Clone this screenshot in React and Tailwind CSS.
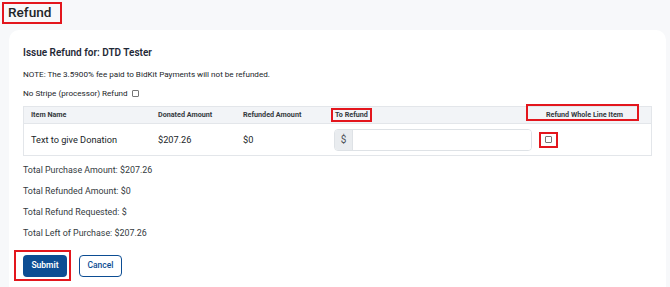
const RED = "border-2 border-[#e3161d]";

const totals = [
  "Total Purchase Amount: $207.26",
  "Total Refunded Amount: $0",
  "Total Refund Requested: $",
  "Total Left of Purchase: $207.26",
];

export default function App() {
  return (
    <div className="min-h-screen bg-[#f7f8fa] text-[#212529] font-['Roboto',sans-serif] overflow-hidden">
      {/* Page title */}
      <div className="pl-[2px] pt-[2px]">
        <div className={`h-[22px] w-[60px] ${RED} flex items-center pl-[4px]`}>
          <h1 className="text-[13.6px] leading-none font-medium">Refund</h1>
        </div>
      </div>

      {/* Card */}
      <div className="ml-[9px] mr-[4px] mt-[6px] bg-white rounded-t-[10px] pl-[14px] pr-[14px] pt-[16px] pb-[20px]">
        <h2 className="text-[10px] leading-[14px] font-semibold text-[#1f2937]">
          Issue Refund for: DTD Tester
        </h2>
        <p className="mt-[8px] text-[8.1px] leading-[12px] text-[#212529]">
          NOTE: The 3.5900% fee paid to BidKit Payments will not be refunded.
        </p>
        <div className="mt-[7px] flex items-center gap-[4px] text-[8.1px] leading-[12px]">
          <span>No Stripe (processor) Refund</span>
          <span className="w-[7px] h-[7px] border border-[#777] rounded-[1px]" />
        </div>

        {/* Table */}
        <div className="mt-[7px] border border-[#e3e6ea]">
          <div className="grid grid-cols-[127px_85px_91px_212px_1fr] h-[17px] bg-[#f2f4f7] border-b border-[#e3e6ea] items-center text-[7.2px] font-bold text-[#343a40]">
            <span className="pl-[7px]">Item Name</span>
            <span className="pl-[7px]">Donated Amount</span>
            <span className="pl-[7px]">Refunded Amount</span>
            <span className="pl-[4px]">
              <span className={`inline-flex items-center h-[14px] px-[2px] ${RED}`}>To Refund</span>
            </span>
            <span className="relative pl-[7px]">
              Refund Whole Line Item
              <span className={`absolute left-[-13px] top-[-6px] w-[113px] h-[17px] ${RED}`} />
            </span>
          </div>
          <div className="grid grid-cols-[127px_85px_91px_212px_1fr] h-[31px] items-center text-[9.2px]">
            <span className="pl-[7px]">Text to give Donation</span>
            <span className="pl-[7px]">$207.26</span>
            <span className="pl-[7px]">$0</span>
            <div className="px-[7px]">
              <div className="flex h-[22px] border border-[#dee2e6] rounded-[4px] overflow-hidden">
                <span className="w-[18px] bg-[#e9ecef] border-r border-[#dee2e6] flex items-center justify-center text-[10px] text-[#495057]">
                  $
                </span>
                <span className="flex-1 bg-white" />
              </div>
            </div>
            <div>
              <span className={`w-[19px] h-[16px] ${RED} flex items-center justify-center`}>
                <span className="w-[7px] h-[7px] border border-[#777] rounded-[1px]" />
              </span>
            </div>
          </div>
        </div>

        {/* Totals */}
        <div className="mt-[4px] flex flex-col text-[8.9px] leading-[15px] text-[#343a40]">
          {totals.map((t) => (
            <p key={t} className="py-[3px]">
              {t}
            </p>
          ))}
        </div>

        {/* Buttons */}
        <div className="mt-[6px] flex items-center gap-[8px]">
          <div className={`-ml-[9px] ${RED} w-[57px] h-[31px] flex items-center justify-end pr-[2px]`}>
            <button className="w-[44px] h-[22px] rounded-[4px] bg-[#0c4d93] text-white text-[8.5px] font-semibold">
              Submit
            </button>
          </div>
          <button className="w-[43px] h-[22px] rounded-[4px] border border-[#0c4d93] text-[#0c4d93] text-[8.5px] font-medium bg-white">
            Cancel
          </button>
        </div>
      </div>
    </div>
  );
}
